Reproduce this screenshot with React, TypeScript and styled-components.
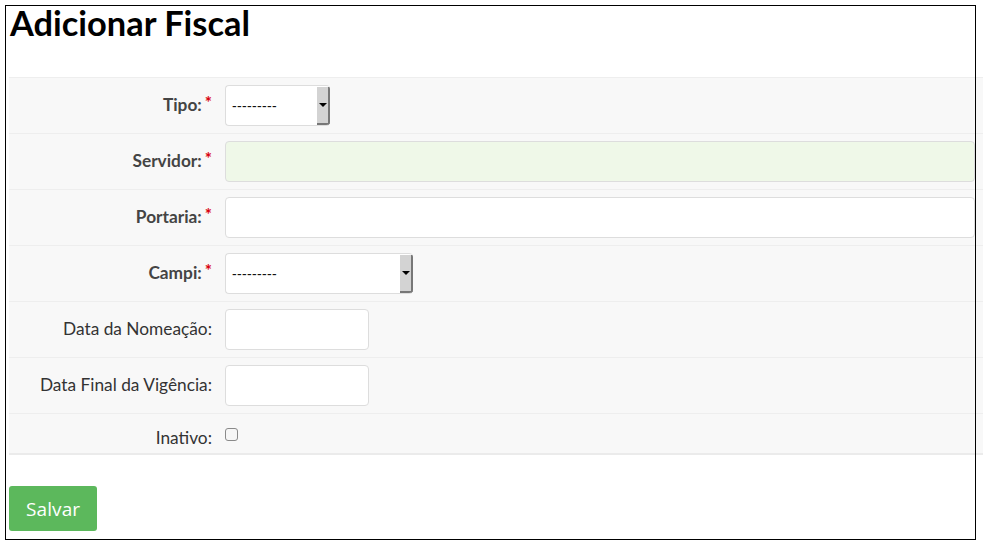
import React from "react";
import styled, { createGlobalStyle } from "styled-components";

const GlobalStyle = createGlobalStyle`
  html, body {
    margin: 0;
    padding: 0;
    background: #fff;
    overflow: hidden;
  }
  body {
    font-family: Lato, "Open Sans", sans-serif;
    color: #333;
  }
`;

const Frame = styled.div`
  position: relative;
  box-sizing: border-box;
  width: 971px;
  height: 535px;
  margin: 5px 0 0 5px;
  padding: 2px 0 0 4px;

  &::after {
    content: "";
    position: absolute;
    inset: 0;
    border: 1px solid #000;
    pointer-events: none;
  }
`;

const Title = styled.h1`
  margin: 0 0 38px 1px;
  font-size: 34.4px;
  line-height: 32px;
  font-weight: 700;
  color: #000;
`;

const Panel = styled.div`
  width: 1000px;
  background: #f8f8f8;
  border-top: 1px solid #eee;
  border-bottom: 2px solid #ebebeb;
`;

const Row = styled.div`
  display: flex;
  align-items: center;
  gap: 13px;
  padding: 7px 0;
  min-height: 41px;
  & + & {
    border-top: 1px solid #eee;
  }
`;

const CheckRow = styled(Row)`
  align-items: flex-start;
  min-height: 25px;
  padding: 11px 0 1px;
`;

const Label = styled.label<{ $required?: boolean }>`
  width: 203px;
  flex: none;
  text-align: right;
  font-size: 17.3px;
  line-height: 25px;
  padding-bottom: 2px;
  font-weight: ${(p) => (p.$required ? 700 : 400)};
  color: ${(p) => (p.$required ? "#444" : "#333")};
`;

const Star = styled.span`
  color: #d9000d;
  font-size: 17px;
  font-weight: 700;
  line-height: 0;
  vertical-align: 2px;
  margin-left: 3px;
`;

const TextInput = styled.div<{ $width: number; $filled?: boolean }>`
  box-sizing: border-box;
  width: ${(p) => p.$width}px;
  height: 41px;
  border: 1px solid #ddd;
  border-radius: 4px;
  background: ${(p) => (p.$filled ? "#eff8e8" : "#fff")};
`;

const SelectBox = styled.div<{ $width: number }>`
  box-sizing: border-box;
  width: ${(p) => p.$width}px;
  height: 41px;
  display: flex;
  align-items: stretch;
  border: 1px solid #ddd;
  border-right: none;
  border-radius: 4px;
  background: #fff;
  overflow: hidden;
`;

const SelectText = styled.span`
  flex: 1;
  display: flex;
  align-items: center;
  padding-left: 6px;
  font-family: "Liberation Sans", Arial, sans-serif;
  font-size: 14px;
  letter-spacing: 0.35px;
  color: #111;
`;

const SelectArrow = styled.span`
  box-sizing: border-box;
  width: 13px;
  margin-top: 1px;
  display: flex;
  align-items: center;
  justify-content: center;
  background: #d3d3d3;
  border-right: 2px solid #777;
  border-bottom: 2px solid #777;

  &::before {
    content: "";
    border-left: 4px solid transparent;
    border-right: 4px solid transparent;
    border-top: 4px solid #000;
  }
`;

const Checkbox = styled.span`
  box-sizing: border-box;
  width: 13px;
  height: 13px;
  margin-top: 3px;
  border: 1px solid #8a8a8a;
  border-radius: 3px;
  background: #f6f6f6;
`;

const SaveButton = styled.button`
  margin-top: 31px;
  height: 45px;
  padding: 0 17px;
  border: none;
  border-radius: 3px;
  background: #5cb85c;
  color: #fff;
  font-family: "Open Sans", sans-serif;
  font-size: 19px;
  letter-spacing: 0.1px;
  cursor: pointer;
`;

const Select = ({ width }: { width: number }) => (
  <SelectBox $width={width}>
    <SelectText>---------</SelectText>
    <SelectArrow />
  </SelectBox>
);

const App = () => {
  return (
    <>
      <GlobalStyle />
      <Frame>
        <Title>Adicionar Fiscal</Title>
        <Panel>
          <Row>
            <Label $required>
              Tipo:<Star>*</Star>
            </Label>
            <Select width={105} />
          </Row>
          <Row>
            <Label $required>
              Servidor:<Star>*</Star>
            </Label>
            <TextInput $width={750} $filled />
          </Row>
          <Row>
            <Label $required>
              Portaria:<Star>*</Star>
            </Label>
            <TextInput $width={750} />
          </Row>
          <Row>
            <Label $required>
              Campi:<Star>*</Star>
            </Label>
            <Select width={188} />
          </Row>
          <Row>
            <Label>Data da Nomeação:</Label>
            <TextInput $width={144} />
          </Row>
          <Row>
            <Label>Data Final da Vigência:</Label>
            <TextInput $width={144} />
          </Row>
          <CheckRow>
            <Label>Inativo:</Label>
            <Checkbox />
          </CheckRow>
        </Panel>
        <SaveButton>Salvar</SaveButton>
      </Frame>
    </>
  );
};

export default App;
